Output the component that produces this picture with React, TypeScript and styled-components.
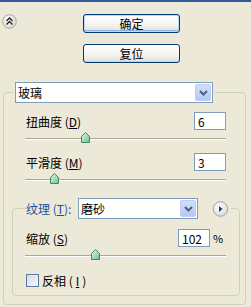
import React from 'react';
import styled, { createGlobalStyle } from 'styled-components';

const GlobalStyle = createGlobalStyle`
  html, body {
    margin: 0;
    padding: 0;
    background: #ece9d8;
  }
  body {
    font-family: "Noto Sans CJK SC", "Liberation Sans", sans-serif;
    font-size: 12px;
    color: #000;
  }
`;

const Panel = styled.div`
  width: 251px;
  height: 307px;
  box-sizing: border-box;
  border-top: 2px solid #34569a;
  background: #ece9d8;
  overflow: hidden;
`;

const Header = styled.div`
  display: flex;
  align-items: flex-start;
  padding: 12px 0 0 2px;
  margin-bottom: 19px;
`;

const RoundButton = styled.button<{ $offset?: number }>`
  display: block;
  padding: 0;
  margin: 0 0 0 ${p => p.$offset ?? 0}px;
  border: none;
  background: none;
  line-height: 0;
`;

const ButtonColumn = styled.div`
  display: flex;
  flex-direction: column;
  gap: 11px;
  margin-left: 66px;
`;

const DialogButton = styled.button<{ $primary?: boolean }>`
  width: 97px;
  height: 19px;
  box-sizing: border-box;
  padding: 0;
  border: 1px solid #003c74;
  border-radius: 3px;
  background: linear-gradient(#ffffff, #f5f4ef 55%, #e2dfd4);
  box-shadow: ${p =>
    p.$primary
      ? 'inset 0 0 0 1px #c4d8f6, inset 0 -1px 0 1px #8fb3e6'
      : 'inset 0 -1px 0 #d6d0c5'};
  font: 12px "Noto Sans CJK SC", sans-serif;
  line-height: 16px;
  color: #000;
`;

const GroupBox = styled.fieldset`
  margin: 0;
  min-width: 0;
  box-sizing: border-box;
  border: 1px solid #d0d0bf;
  border-radius: 4px;
`;

const OuterGroup = styled(GroupBox)`
  width: 243px;
  margin-left: 3px;
  padding: 0 5px 8px 8px;
`;

const InnerGroup = styled(GroupBox)`
  margin-top: 13px;
  padding: 1px 13px 6px 13px;
`;

const Legend = styled.legend<{ $outer?: boolean }>`
  display: flex;
  align-items: center;
  padding: ${p => (p.$outer ? '0 2px' : '0 2px 0 0')};
  margin-left: ${p => (p.$outer ? '1px' : '0')};
`;

const Controls = styled.div`
  padding: 0 14px;
`;

const Combo = styled.div<{ $width: number }>`
  display: flex;
  align-items: center;
  width: ${p => p.$width}px;
  height: 21px;
  box-sizing: border-box;
  border: 1px solid #7f9db9;
  background: #fff;
  padding: 0 1px 0 2px;
`;

const ComboText = styled.span`
  flex: 1;
  font-size: 12px;
  line-height: 19px;
`;

const ComboArrow = styled.span`
  display: flex;
  align-items: center;
  justify-content: center;
  width: 16px;
  height: 17px;
  box-sizing: border-box;
  border: 1px solid #bccdf5;
  border-radius: 2px;
  background: linear-gradient(#d3def9, #b6c8f4);
`;

const FieldRow = styled.div<{ $gap?: number }>`
  display: flex;
  align-items: center;
  height: 18px;
  margin-top: ${p => p.$gap ?? 9}px;
`;

const Label = styled.span<{ $accent?: boolean; $width?: number }>`
  flex: ${p => (p.$width ? 'none' : '1')};
  width: ${p => (p.$width ? `${p.$width}px` : 'auto')};
  font-size: 12px;
  white-space: nowrap;
  color: ${p => (p.$accent ? '#1f4f9d' : '#000')};

  u {
    text-decoration: underline;
  }
`;

const NumberBox = styled.input`
  width: 32px;
  height: 18px;
  box-sizing: border-box;
  margin: 0;
  padding: 0 0 0 3px;
  border: 1px solid #7f9db9;
  background: #fff;
  font: 12px "Noto Sans CJK SC", sans-serif;
  color: #000;
  outline: none;
`;

const Unit = styled.span`
  width: 16px;
  text-align: center;
  font-size: 11px;
`;

const Track = styled.div`
  position: relative;
  height: 12px;
  margin: 2px 0 0 -1px;

  &::before {
    content: '';
    position: absolute;
    left: 0;
    right: 0;
    top: 6px;
    height: 1px;
    background: #a9a697;
  }
  &::after {
    content: '';
    position: absolute;
    left: 0;
    right: 0;
    top: 7px;
    height: 1px;
    background: #fff;
  }
`;

const Thumb = styled.svg`
  position: absolute;
  top: 0;
  margin-left: -4px;
  z-index: 1;
`;

const CheckRow = styled.label`
  display: flex;
  align-items: center;
  gap: 3px;
  margin-top: 11px;
  font-size: 12px;
`;

const CheckBox = styled.input`
  appearance: none;
  width: 13px;
  height: 13px;
  margin: 0;
  box-sizing: border-box;
  border: 1px solid #5a7aa0;
  background: linear-gradient(135deg, #d8dcdf, #f6f7f8);
`;

const ChevronDown = () => (
  <svg width="9" height="6" viewBox="0 0 9 6">
    <path d="M1 1 L4.5 4.5 L8 1" fill="none" stroke="#4d6185" strokeWidth="2" />
  </svg>
);

const Slider = ({ value, min, max }: { value: number; min: number; max: number }) => {
  const pct = ((value - min) / (max - min)) * 100;
  return (
    <Track>
      <Thumb width="9" height="11" viewBox="0 0 9 11" style={{ left: `${pct}%` }}>
        <defs>
          <linearGradient id="thumbFill" x1="0" y1="0" x2="1" y2="1">
            <stop offset="0" stopColor="#e6f6ea" />
            <stop offset="1" stopColor="#6cc08c" />
          </linearGradient>
        </defs>
        <path
          d="M4.5 0.5 L8.5 4.5 L8.5 10.5 L0.5 10.5 L0.5 4.5 Z"
          fill="url(#thumbFill)"
          stroke="#3f8a62"
          strokeLinejoin="round"
        />
      </Thumb>
    </Track>
  );
};

const CollapseIcon = () => (
  <svg width="15" height="15" viewBox="0 0 15 15">
    <defs>
      <radialGradient id="knob" cx="0.4" cy="0.35" r="0.7">
        <stop offset="0" stopColor="#ffffff" />
        <stop offset="1" stopColor="#d8d7cf" />
      </radialGradient>
    </defs>
    <circle cx="7.5" cy="7.5" r="6.8" fill="url(#knob)" stroke="#a9a79c" />
    <path d="M4.5 7 L7.5 4 L10.5 7 M4.5 10.5 L7.5 7.5 L10.5 10.5" fill="none" stroke="#222" strokeWidth="1.4" />
  </svg>
);

const MenuIcon = () => (
  <svg width="17" height="16" viewBox="0 0 17 16">
    <defs>
      <radialGradient id="knob2" cx="0.4" cy="0.35" r="0.7">
        <stop offset="0" stopColor="#ffffff" />
        <stop offset="1" stopColor="#d8d7cf" />
      </radialGradient>
    </defs>
    <circle cx="8.5" cy="8" r="7.3" fill="url(#knob2)" stroke="#9aa6bc" />
    <path d="M7 5 L10.5 8 L7 11 Z" fill="#1b3b7c" />
  </svg>
);

export default function App() {
  return (
    <>
      <GlobalStyle />
      <Panel>
        <Header>
          <RoundButton aria-label="收起">
            <CollapseIcon />
          </RoundButton>
          <ButtonColumn>
            <DialogButton $primary>确定</DialogButton>
            <DialogButton>复位</DialogButton>
          </ButtonColumn>
        </Header>

        <OuterGroup>
          <Legend $outer>
            <Combo $width={198}>
              <ComboText>玻璃</ComboText>
              <ComboArrow>
                <ChevronDown />
              </ComboArrow>
            </Combo>
          </Legend>

          <Controls>
            <FieldRow>
              <Label>扭曲度 (<u>D</u>)</Label>
              <NumberBox defaultValue="6" />
            </FieldRow>
            <Slider value={6} min={0} max={20} />
            <FieldRow>
              <Label>平滑度 (<u>M</u>)</Label>
              <NumberBox defaultValue="3" />
            </FieldRow>
            <Slider value={3} min={1} max={15} />
          </Controls>

          <InnerGroup>
            <Legend>
              <Label $accent $width={52}>纹理 (<u>T</u>):</Label>
              <Combo $width={120}>
                <ComboText>磨砂</ComboText>
                <ComboArrow>
                  <ChevronDown />
                </ComboArrow>
              </Combo>
              <RoundButton aria-label="菜单" $offset={14}>
                <MenuIcon />
              </RoundButton>
            </Legend>
            <FieldRow $gap={9}>
              <Label>缩放 (<u>S</u>)</Label>
              <NumberBox defaultValue="102" />
              <Unit>%</Unit>
            </FieldRow>
            <Slider value={102} min={50} max={200} />
            <CheckRow>
              <CheckBox type="checkbox" />
              反相 (<u>I</u>)
            </CheckRow>
          </InnerGroup>
        </OuterGroup>
      </Panel>
    </>
  );
}
